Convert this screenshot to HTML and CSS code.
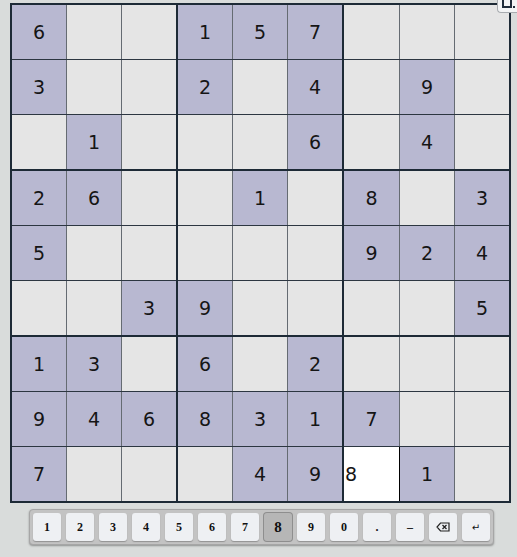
FILE: index.html
```html
<!DOCTYPE html>
<html>
<head>
<meta charset="utf-8">
<link rel="stylesheet" href="styles.css">
</head>
<body>
<div class="corner-btn">
  <svg width="20" height="13" viewBox="0 0 20 13"><rect x="5" y="-2" width="8" height="9" fill="none" stroke="#1f2c3a" stroke-width="2"/><rect x="15" y="6" width="2" height="2" fill="#1f2c3a"/></svg>
</div>
<table class="board" id="board"></table>
<div class="keypad">
  <div class="key">1</div>
  <div class="key">2</div>
  <div class="key">3</div>
  <div class="key">4</div>
  <div class="key">5</div>
  <div class="key">6</div>
  <div class="key">7</div>
  <div class="key active">8</div>
  <div class="key">9</div>
  <div class="key">0</div>
  <div class="key">.</div>
  <div class="key">–</div>
  <div class="key"><svg width="14" height="10" viewBox="0 0 14 10"><path d="M4.5 1 H13 V9 H4.5 L1 5 Z" fill="none" stroke="#222" stroke-width="1.2"/><path d="M6.5 3 L10.5 7 M10.5 3 L6.5 7" stroke="#222" stroke-width="1.3"/></svg></div>
  <div class="key small">↵</div>
</div>
<script>
var rows = [
  "6..157...",
  "3..2.4.9.",
  ".1...6.4.",
  "26..1.8.3",
  "5.....924",
  "..39....5",
  "13.6.2...",
  "9468317..",
  "7...49*1."
];
var t = document.getElementById('board');
for (var r = 0; r < 9; r++) {
  var tr = document.createElement('tr');
  if (r === 2 || r === 5) tr.className = 'box-end';
  for (var c = 0; c < 9; c++) {
    var td = document.createElement('td');
    var ch = rows[r][c];
    var cls = [];
    if (c === 2 || c === 5) cls.push('col-end');
    if (ch === '*') { cls.push('input'); td.textContent = '8'; }
    else if (ch !== '.') { cls.push('given'); td.textContent = ch; }
    td.className = cls.join(' ');
    tr.appendChild(td);
  }
  t.appendChild(tr);
}
</script>
</body>
</html>
```
FILE: styles.css
```css
html, body {
  margin: 0;
  padding: 0;
  background: #d9dcdb;
}
body {
  width: 517px;
  height: 557px;
  overflow: hidden;
  position: relative;
  padding-top: 3px;
  box-sizing: border-box;
}
.board {
  margin-left: 10px;
  border-collapse: collapse;
  table-layout: fixed;
  border: 2px solid #1d2a36;
  font-family: "DejaVu Sans", sans-serif;
  font-size: 19px;
  color: #151515;
}
.board td {
  width: 54px;
  height: 54px;
  padding: 0;
  text-align: center;
  vertical-align: middle;
  background: #e5e5e5;
  border-right: 1px solid #656b72;
  border-bottom: 1px solid #2c3641;
  box-sizing: content-box;
}
.board td.col-end {
  border-right: 2px solid #1d2a36;
}
.board tr.box-end td {
  border-bottom: 2px solid #1d2a36;
}
.board td.given {
  background: #b8b8d1;
}
.board td.input {
  background: #ffffff;
  text-align: left;
  padding-left: 1px;
  border-right: 1px solid #000;
  border-top: 1px solid #000;
}
.corner-btn {
  position: absolute;
  top: 0;
  right: 0;
  width: 19px;
  height: 12px;
  background: #f3f4f5;
  border-left: 1px solid #a8acb0;
  border-bottom: 1px solid #a8acb0;
  border-bottom-left-radius: 4px;
  overflow: hidden;
}
.corner-btn svg {
  display: block;
}
.keypad {
  margin-top: 6px;
  margin-left: 29px;
  width: 457px;
  padding: 3px;
  display: flex;
  gap: 5px;
  background: #c3c3c3;
  border: 1px solid #a6a6a6;
  border-radius: 4px;
  box-shadow: 0 1px 2px rgba(0,0,0,0.35);
}
.key {
  width: 28px;
  height: 28px;
  display: flex;
  align-items: center;
  justify-content: center;
  background: #eef0f3;
  border-radius: 3px;
  box-shadow: 0 1px 1px rgba(0,0,0,0.25);
  font-family: "Liberation Serif", serif;
  font-weight: bold;
  font-size: 12px;
  color: #111;
}
.key.active {
  background: #b6b6b6;
  box-shadow: 0 0 0 1px #8e8e8e;
  font-size: 15px;
}
.key.small {
  font-weight: normal;
  font-family: "DejaVu Sans", sans-serif;
  font-size: 10px;
}
```
